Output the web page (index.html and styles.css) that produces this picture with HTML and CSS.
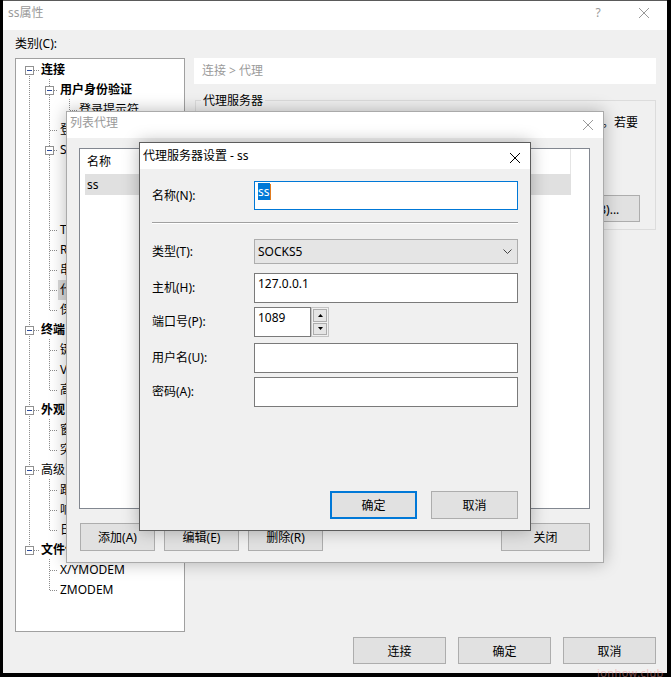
FILE: index.html
```html
<!DOCTYPE html>
<html lang="zh-CN">
<head>
    <meta charset="UTF-8">
    <meta name="viewport" content="width=device-width, initial-scale=1.0">
    <title>ss属性</title>
    <link rel="stylesheet" href="styles.css">
</head>
<body>
    <div class="window main">
        <div class="titlebar inactive">
            <span class="title">ss属性</span>
            <span class="caption-btn help">?</span>
            <span class="caption-btn">
                <svg width="10" height="10" viewBox="0 0 10 10"><path d="M0 0L10 10M10 0L0 10" stroke="#999" stroke-width="1"/></svg>
            </span>
        </div>
        <div class="client">
            <div class="columns">
                <div class="category-label">类别(C):</div>
                <div class="tree">
                    <svg class="tree-lines" width="168" height="572" viewBox="0 0 168 572">
                        <g stroke="#8c8c8c" stroke-dasharray="1 1" shape-rendering="crispEdges" fill="none">
                            <path d="M13.5 11V491M33.5 20V251M33.5 280V331M33.5 360V391M33.5 420V471M33.5 500V531M53.5 40V51M53.5 100V151"/>
                            <path d="M18 11.5H24M18 271.5H24M18 351.5H24M18 411.5H24M18 491.5H24M38 31.5H42M38 91.5H42M34 71.5H42M34 171.5H42M34 191.5H42M34 211.5H42M34 231.5H42M34 251.5H42M34 291.5H42M34 311.5H42M34 331.5H42M34 371.5H42M34 391.5H42M34 431.5H42M34 451.5H42M34 471.5H42M34 511.5H42M34 531.5H42M54 51.5H62M54 111.5H62M54 131.5H62M54 151.5H62"/>
                        </g>
                        <g fill="#fff" stroke="#919191" shape-rendering="crispEdges">
                            <rect x="9.5" y="7.5" width="8" height="8"/>
                            <rect x="9.5" y="267.5" width="8" height="8"/>
                            <rect x="9.5" y="347.5" width="8" height="8"/>
                            <rect x="9.5" y="407.5" width="8" height="8"/>
                            <rect x="9.5" y="487.5" width="8" height="8"/>
                            <rect x="29.5" y="27.5" width="8" height="8"/>
                            <rect x="29.5" y="87.5" width="8" height="8"/>
                        </g>
                        <path stroke="#2b4a9c" shape-rendering="crispEdges" d="M11 11.5H16M11 271.5H16M11 351.5H16M11 411.5H16M11 491.5H16M31 31.5H36M31 91.5H36"/>
                    </svg>
                    <div class="node l0 bold">连接</div>
                    <div class="node l1 bold">用户身份验证</div>
                    <div class="node l2">登录提示符</div>
                    <div class="node l1">登录脚本</div>
                    <div class="node l1">SSH</div>
                    <div class="node l2">安全性</div>
                    <div class="node l2">隧道</div>
                    <div class="node l2">SFTP</div>
                    <div class="node l1">TELNET</div>
                    <div class="node l1">RLOGIN</div>
                    <div class="node l1">串口</div>
                    <div class="node l1"><span class="sel">代理</span></div>
                    <div class="node l1">保持活动状态</div>
                    <div class="node l0 bold">终端</div>
                    <div class="node l1">键盘</div>
                    <div class="node l1">VT 模式</div>
                    <div class="node l1">高级</div>
                    <div class="node l0 bold">外观</div>
                    <div class="node l1">窗口</div>
                    <div class="node l1">突出显示</div>
                    <div class="node l0">高级</div>
                    <div class="node l1">跟踪</div>
                    <div class="node l1">响铃</div>
                    <div class="node l1">日志记录</div>
                    <div class="node l0 bold">文件传输</div>
                    <div class="node l1">X/YMODEM</div>
                    <div class="node l1">ZMODEM</div>
                </div>
                <div class="panel">
                    <div class="crumb">连接 &gt; 代理</div>
                    <fieldset class="group">
                        <legend>代理服务器</legend>
                        <div class="group-text">通过代理服务器连接到主机时，请选择代理服务器。若要</div>
                        <div class="group-actions">
                            <button class="btn browse">浏览(B)...</button>
                        </div>
                    </fieldset>
                </div>
            </div>
            <div class="dialog-buttons">
                <button class="btn">连接</button>
                <button class="btn">确定</button>
                <button class="btn">取消</button>
            </div>
        </div>

        <div class="window dialog list-dialog">
            <div class="titlebar dlg-title inactive">
                <span class="title">列表代理</span>
                <span class="caption-btn small">
                    <svg width="10" height="10" viewBox="0 0 10 10"><path d="M0 0L10 10M10 0L0 10" stroke="#999" stroke-width="1"/></svg>
                </span>
            </div>
            <div class="dlg-body list-body">
                <div class="listview">
                    <div class="lv-header"><div class="lv-col">名称</div></div>
                    <div class="lv-row">ss</div>
                </div>
                <div class="lv-buttons">
                    <button class="btn">添加(A)</button>
                    <button class="btn">编辑(E)</button>
                    <button class="btn">删除(R)</button>
                    <button class="btn close-btn">关闭</button>
                </div>
            </div>
        </div>

        <div class="window dialog proxy-dialog">
            <div class="titlebar dlg-title">
                <span class="title">代理服务器设置 - ss</span>
                <span class="caption-btn small">
                    <svg width="10" height="10" viewBox="0 0 10 10"><path d="M0 0L10 10M10 0L0 10" stroke="#000" stroke-width="1"/></svg>
                </span>
            </div>
            <div class="dlg-body proxy-body">
                <div class="form-row">
                    <label class="form-label">名称(N):</label>
                    <div class="edit focus h29"><span class="hl">ss</span><span class="caret"></span></div>
                </div>
                <div class="sep"></div>
                <div class="form-row row-type">
                    <label class="form-label">类型(T):</label>
                    <div class="combo">
                        <span>SOCKS5</span>
                        <svg class="chevron" width="9" height="5" viewBox="0 0 9 5"><path d="M0.5 0.5L4.5 4.5L8.5 0.5" fill="none" stroke="#444"/></svg>
                    </div>
                </div>
                <div class="form-row row-host">
                    <label class="form-label">主机(H):</label>
                    <div class="edit">127.0.0.1</div>
                </div>
                <div class="form-row row-port">
                    <label class="form-label">端口号(P):</label>
                    <div class="edit port">1089</div>
                    <div class="spin">
                        <div class="spin-btn"><svg width="5" height="3" viewBox="0 0 5 3"><path d="M2.5 0L5 3H0Z" fill="#000"/></svg></div>
                        <div class="spin-btn"><svg width="5" height="3" viewBox="0 0 5 3"><path d="M0 0H5L2.5 3Z" fill="#000"/></svg></div>
                    </div>
                </div>
                <div class="form-row row-user">
                    <label class="form-label">用户名(U):</label>
                    <div class="edit"></div>
                </div>
                <div class="form-row row-pass">
                    <label class="form-label">密码(A):</label>
                    <div class="edit"></div>
                </div>
                <div class="form-buttons">
                    <button class="btn default">确定</button>
                    <button class="btn">取消</button>
                </div>
            </div>
        </div>
    </div>
    <div class="watermark">ionhow.club</div>
</body>
</html>
```

FILE: styles.css
```css
* {
    box-sizing: border-box;
}
html, body {
    margin: 0;
    height: 100%;
    overflow: hidden;
}
body {
    position: relative;
    background: #000;
    font-family: "Noto Sans", "Noto Sans CJK SC", sans-serif;
    font-size: 12px;
    color: #000;
}
button {
    font: inherit;
    color: inherit;
}
.window {
    background: #f0f0f0;
}
.main {
    position: relative;
    width: 664px;
    height: 673px;
    margin-left: 3px;
    border-top: 1px solid #5a5a5a;
}

/* title bars */
.titlebar {
    display: flex;
    height: 29px;
    background: #fff;
}
.titlebar.inactive {
    color: #999;
}
.title {
    padding: 3px 0 0 5px;
    line-height: 18px;
    white-space: nowrap;
}
.caption-btn {
    width: 46px;
    display: flex;
    justify-content: center;
    padding-top: 7px;
}
.caption-btn.help {
    margin-left: auto;
    padding-top: 3px;
    line-height: 18px;
}
.caption-btn.small {
    width: 30px;
    margin-left: auto;
    align-items: center;
    padding-top: 0;
}

/* main client area */
.client {
    height: 643px;
    padding: 4px 11px 9px 12px;
    display: flex;
    flex-direction: column;
}
.columns {
    display: grid;
    grid-template-columns: 170px 462px;
    grid-template-rows: 24px 574px;
    column-gap: 9px;
}
.category-label {
    grid-column: 1;
    grid-row: 1;
    line-height: 20px;
}
.tree {
    grid-column: 1;
    grid-row: 2;
    position: relative;
    background: #fff;
    border: 1px solid #a0a0a0;
    padding-top: 1px;
    overflow: hidden;
}
.tree-lines {
    position: absolute;
    top: 0;
    left: 0;
}
.node {
    position: relative;
    height: 20px;
    line-height: 20px;
    white-space: nowrap;
}
.node.l0 {
    padding-left: 25px;
}
.node.l1 {
    padding-left: 44px;
}
.node.l2 {
    padding-left: 63px;
}
.bold {
    font-weight: bold;
}
.sel {
    display: inline-block;
    background: #d9d9d9;
    margin-left: -2px;
    padding: 0 2px;
}
.panel {
    grid-column: 2;
    grid-row: 2;
}
.crumb {
    height: 26px;
    line-height: 26px;
    padding-left: 8px;
    background: #fff;
    color: #9a9a9a;
}
.group {
    margin: 9px 0 0 1px;
    padding: 5px 15px 7px 5px;
    border: 1px solid #dcdcdc;
    min-width: 0;
}
.group legend {
    padding: 0 2px;
    line-height: 15px;
}
.group-text {
    text-align: right;
    padding-right: 2px;
    line-height: 20px;
    white-space: nowrap;
}
.group-actions {
    display: flex;
    justify-content: flex-end;
    margin-top: 62px;
}
.btn {
    background: #e1e1e1;
    border: 1px solid #adadad;
    padding: 0;
    width: 93px;
    height: 27px;
}
.btn.browse {
    width: 100px;
    padding-left: 10px;
}
.dialog-buttons {
    display: flex;
    justify-content: flex-end;
    gap: 12px;
    margin-top: 5px;
}

/* dialogs */
.dialog {
    position: absolute;
    display: flex;
    flex-direction: column;
    box-shadow: 0 0 16px rgba(0, 0, 0, 0.28);
}
.dlg-title {
    height: 26px;
    flex: none;
}
.dlg-title .title {
    padding: 1px 0 0 3px;
    line-height: 20px;
}
.dlg-body {
    flex: 1;
    display: flex;
    flex-direction: column;
}
.list-dialog {
    left: 63px;
    top: 110px;
    width: 538px;
    height: 452px;
    border: 1px solid #aaa;
}
.list-body {
    padding: 10px 13px 11px 12px;
}
.listview {
    height: 361px;
    background: #fff;
    border: 1px solid #828790;
}
.lv-header {
    display: flex;
    height: 25px;
}
.lv-col {
    width: 491px;
    border-right: 1px solid #e5e5e5;
    padding-left: 7px;
    line-height: 25px;
}
.lv-row {
    margin-left: 5px;
    width: 486px;
    height: 21px;
    line-height: 21px;
    padding-left: 2px;
    background: #e0e0e0;
}
.lv-buttons {
    display: flex;
    gap: 9px;
    margin-top: 14px;
}
.lv-buttons .btn {
    width: 75px;
    height: 28px;
}
.lv-buttons .btn:first-child {
    margin-left: 1px;
}
.lv-buttons .close-btn {
    margin-left: auto;
    width: 89px;
}

.proxy-dialog {
    left: 136px;
    top: 141px;
    width: 392px;
    height: 389px;
    border: 1px solid #5c5c5c;
}
.proxy-dialog .dlg-title .title {
    padding-top: 3px;
}
.proxy-dialog .caption-btn.small {
    padding-top: 3px;
}
.proxy-body {
    padding: 12px 12px 11px 12px;
}
.form-row {
    display: flex;
    align-items: center;
}
.form-label {
    width: 102px;
    line-height: 20px;
}
.edit {
    width: 264px;
    height: 30px;
    background: #fff;
    border: 1px solid #7a7a7a;
    padding: 2px 0 0 3px;
    line-height: 16px;
}
.edit.h29 {
    height: 29px;
}
.edit.focus {
    border-color: #0078d7;
}
.hl {
    background: #0078d7;
    color: #fff;
}
.caret {
    display: inline-block;
    width: 1px;
    height: 16px;
    vertical-align: top;
    background: #e07b1f;
}
.sep {
    margin-top: 12px;
    height: 2px;
    border-top: 1px solid #a0a0a0;
    border-bottom: 1px solid #fff;
}
.row-type {
    margin-top: 15px;
}
.row-host {
    margin-top: 9px;
}
.row-port {
    margin-top: 4px;
}
.row-user {
    margin-top: 6px;
}
.row-pass {
    margin-top: 4px;
}
.combo {
    width: 264px;
    height: 25px;
    display: flex;
    align-items: center;
    padding-left: 3px;
    background: #e5e5e5;
    border: 1px solid #adadad;
}
.chevron {
    margin-left: auto;
    margin-right: 5px;
}
.edit.port {
    width: 57px;
}
.spin {
    width: 18px;
    height: 30px;
    display: flex;
    flex-direction: column;
    gap: 1px;
    padding: 1px;
    border: 1px solid #c4c4c4;
    background: #f0f0f0;
}
.spin-btn {
    flex: 1;
    display: flex;
    align-items: center;
    justify-content: center;
    background: #e5e5e5;
    border: 1px solid #adadad;
}
.form-buttons {
    margin-top: auto;
    display: flex;
    justify-content: flex-end;
    gap: 14px;
}
.form-buttons .btn {
    width: 87px;
    height: 28px;
}
.btn.default {
    border: 2px solid #0078d7;
}

.watermark {
    position: absolute;
    left: 597px;
    top: 665px;
    font-size: 11px;
    letter-spacing: 0.4px;
    color: rgba(236, 150, 150, 0.5);
}
```
